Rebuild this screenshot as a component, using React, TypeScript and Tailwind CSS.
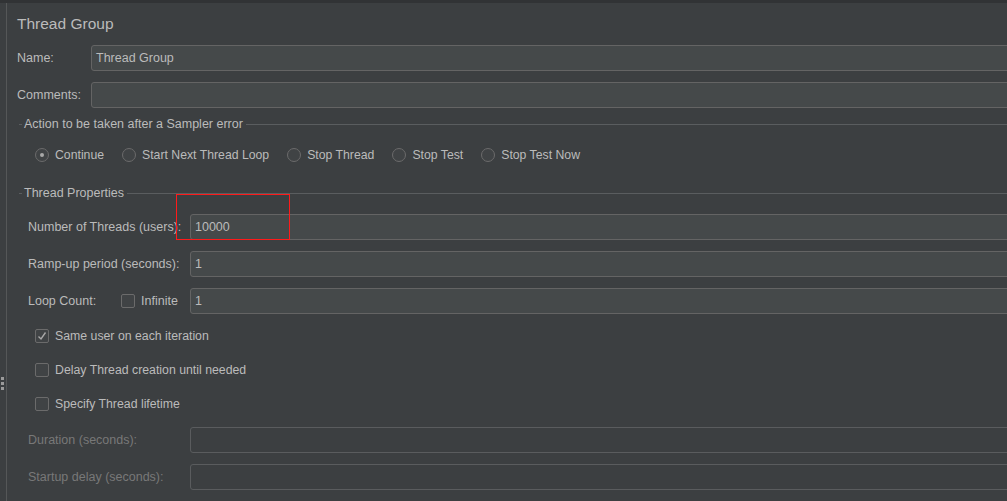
import React from "react";

const font = { fontFamily: '"Liberation Sans", Arial, sans-serif' };

function TextInput({ value = "", disabled = false }: { value?: string; disabled?: boolean }) {
  return (
    <div
      className={
        "flex-1 h-[26px] rounded-[3px] border flex items-center pl-[4px] text-[12.5px] " +
        (disabled ? "border-[#5a5c5e] bg-[#3c3f41]" : "border-[#646464] bg-[#45494a] text-[#bbbbbb]")
      }
    >
      {value}
    </div>
  );
}

function Radio({ checked = false, label }: { checked?: boolean; label: string }) {
  return (
    <div className="flex items-center gap-[6px]">
      <div className="w-[14px] h-[14px] rounded-full border border-[#6b6b6b] bg-[#404345] flex items-center justify-center">
        {checked && <div className="w-[4px] h-[4px] rounded-full bg-[#a8a8a8]" />}
      </div>
      <span>{label}</span>
    </div>
  );
}

function Check({ checked = false }: { checked?: boolean }) {
  return (
    <div className="w-[14px] h-[14px] rounded-[2px] border border-[#6b6b6b] bg-[#404345] flex items-center justify-center">
      {checked && (
        <svg width="10" height="10" viewBox="0 0 10 10">
          <polyline points="1.5,5.5 4,8 8.5,1.5" fill="none" stroke="#a8a8a8" strokeWidth="1.4" />
        </svg>
      )}
    </div>
  );
}

function Legend({ text }: { text: string }) {
  return (
    <div className="flex items-center h-[16px]">
      <div className="w-[3px] h-px bg-[#5a5d5f]" />
      <span className="pl-[2px] pr-[3px]">{text}</span>
      <div className="flex-1 h-px bg-[#5a5d5f]" />
    </div>
  );
}

export default function App() {
  return (
    <div
      className="w-[1007px] h-[501px] overflow-hidden bg-[#3c3f41] text-[#bbbbbb] text-[12.5px] flex flex-col relative"
      style={font}
    >
      <div className="h-[3px] bg-[#313335] shrink-0" />
      <div className="flex flex-1">
        <div className="w-[6px] shrink-0 border-r border-[#555758] box-content flex flex-col items-start">
          <div className="mt-[374px] ml-[1px] flex flex-col gap-[2px]">
            <div className="w-[3px] h-[3px] bg-[#9a9a9a]" />
            <div className="w-[3px] h-[3px] bg-[#9a9a9a]" />
            <div className="w-[3px] h-[3px] bg-[#9a9a9a]" />
          </div>
        </div>
        <div className="w-[1040px] shrink-0 flex flex-col">
          <div className="mt-[11px] h-[20px] pl-[10px] flex items-center text-[15.5px]">Thread Group</div>

          <div className="mt-[11px] flex items-center pl-[10px]">
            <div className="w-[74px]">Name:</div>
            <TextInput value="Thread Group" />
          </div>
          <div className="mt-[11px] flex items-center pl-[10px]">
            <div className="w-[74px]">Comments:</div>
            <TextInput />
          </div>

          <div className="mt-[8px] pl-[12px]">
            <Legend text="Action to be taken after a Sampler error" />
          </div>
          <div className="mt-[13px] h-[20px] pl-[28px] flex items-center gap-[18px] text-[12.25px]">
            <Radio checked label="Continue" />
            <Radio label="Start Next Thread Loop" />
            <Radio label="Stop Thread" />
            <Radio label="Stop Test" />
            <Radio label="Stop Test Now" />
          </div>

          <div className="mt-[20px] pl-[12px]">
            <Legend text="Thread Properties" />
          </div>

          <div className="pl-[21px] flex flex-col">
            <div className="mt-[13px] flex items-center">
              <div className="w-[162px]">Number of Threads (users):</div>
              <TextInput value="10000" />
            </div>
            <div className="mt-[11px] flex items-center">
              <div className="w-[162px]">Ramp-up period (seconds):</div>
              <TextInput value="1" />
            </div>
            <div className="mt-[11px] flex items-center">
              <div className="w-[93px]">Loop Count:</div>
              <div className="w-[69px] flex items-center gap-[6px]">
                <Check />
                <span>Infinite</span>
              </div>
              <TextInput value="1" />
            </div>

            <div className="mt-[12px] h-[20px] pl-[7px] flex items-center gap-[6px] text-[12.3px]">
              <Check checked />
              <span>Same user on each iteration</span>
            </div>
            <div className="mt-[14px] h-[20px] pl-[7px] flex items-center gap-[6px] text-[12.3px]">
              <Check />
              <span>Delay Thread creation until needed</span>
            </div>
            <div className="mt-[14px] h-[20px] pl-[7px] flex items-center gap-[6px] text-[12.3px]">
              <Check />
              <span>Specify Thread lifetime</span>
            </div>

            <div className="mt-[13px] flex items-center text-[#787878]">
              <div className="w-[162px]">Duration (seconds):</div>
              <TextInput disabled />
            </div>
            <div className="mt-[11px] flex items-center text-[#787878]">
              <div className="w-[162px]">Startup delay (seconds):</div>
              <TextInput disabled />
            </div>
          </div>
        </div>
      </div>
      <div className="absolute left-[176px] top-[194px] w-[114px] h-[46px] border border-[#ff1a1a] pointer-events-none" />
    </div>
  );
}
